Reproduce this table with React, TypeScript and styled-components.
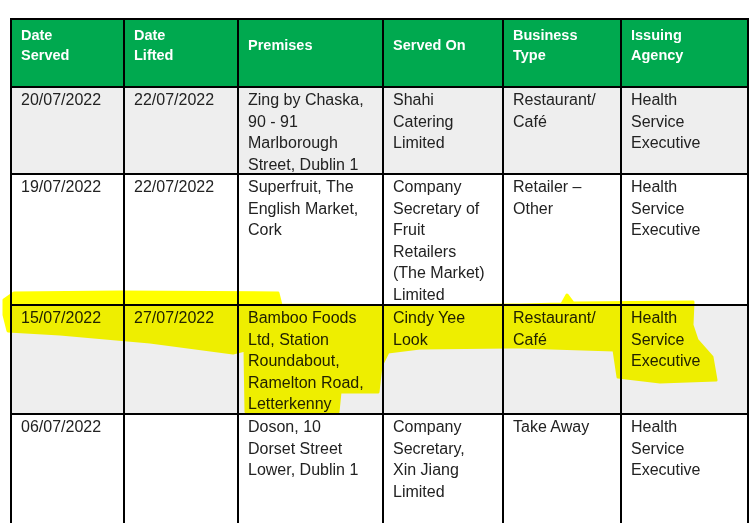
import styled, { createGlobalStyle } from 'styled-components';

const GlobalStyle = createGlobalStyle`
  html,
  body {
    margin: 0;
    padding: 0;
    overflow: hidden;
    background: #ffffff;
  }
`;

const Page = styled.div`
  position: relative;
  width: 752px;
  height: 523px;
  overflow: hidden;
  padding: 18px 0 0 10px;
  box-sizing: border-box;
  font-family: 'Liberation Sans', Arial, sans-serif;
`;

const Table = styled.div`
  display: grid;
  grid-template-columns: 111px 112px 143px 118px 116px 125px;
  grid-template-rows: 66px 85px 129px 107px 120px;
  gap: 2px;
  padding: 2px;
  width: max-content;
  background: #000000;
`;

const HeadCell = styled.div`
  display: flex;
  align-items: center;
  padding: 5px 12px 21px 9px;
  background: #00a94f;
  color: #ffffff;
  font-size: 14.5px;
  font-weight: 700;
  line-height: 20px;
`;

const Cell = styled.div<{ $shade?: boolean }>`
  padding: 1px 14px 0 9px;
  background: ${(p) => (p.$shade ? '#eeeeee' : '#ffffff')};
  color: #222222;
  font-size: 16px;
  line-height: 21.6px;
`;

const Marker = styled.svg`
  position: absolute;
  left: 0;
  top: 0;
  pointer-events: none;
  mix-blend-mode: multiply;
`;

const headers = [
  <>Date<br />Served</>,
  <>Date<br />Lifted</>,
  'Premises',
  'Served On',
  <>Business<br />Type</>,
  <>Issuing<br />Agency</>,
];

const rows = [
  ['20/07/2022', '22/07/2022', 'Zing by Chaska, 90 - 91 Marlborough Street, Dublin 1', 'Shahi Catering Limited', 'Restaurant/ Café', 'Health Service Executive'],
  ['19/07/2022', '22/07/2022', 'Superfruit, The English Market, Cork', 'Company Secretary of Fruit Retailers (The Market) Limited', 'Retailer – Other', 'Health Service Executive'],
  ['15/07/2022', '27/07/2022', 'Bamboo Foods Ltd, Station Roundabout, Ramelton Road, Letterkenny', 'Cindy Yee Look', 'Restaurant/ Café', 'Health Service Executive'],
  ['06/07/2022', '', 'Doson, 10 Dorset Street Lower, Dublin 1', 'Company Secretary, Xin Jiang Limited', 'Take Away', 'Health Service Executive'],
];

// hand-drawn yellow marker over the third row
const markerPath =
  'M4 300 L14 293 L120 292 L278 293 L281 305 L420 306 L520 305 L562 304 L567 295 L573 303 ' +
  'L693 302 L692 325 L697 340 L712 357 L716 380 L660 382 L618 377 L614 350 L520 347 L420 348 ' +
  'L388 352 L381 366 L378 392 L340 392 L338 412 L246 412 L245 350 L233 353 L150 342 L60 334 ' +
  'L8 331 L4 315 Z';

export default function App() {
  return (
    <Page>
      <GlobalStyle />
      <Table>
        {headers.map((h, i) => (
          <HeadCell key={i}>
            <span>{h}</span>
          </HeadCell>
        ))}
        {rows.map((row, r) =>
          row.map((text, c) => (
            <Cell key={`${r}-${c}`} $shade={r % 2 === 0}>
              {text}
            </Cell>
          ))
        )}
      </Table>
      <Marker width="752" height="523" viewBox="0 0 752 523">
        <path d={markerPath} fill="#ffff00" stroke="#ffff00" strokeWidth="3" strokeLinejoin="round" />
      </Marker>
    </Page>
  );
}
